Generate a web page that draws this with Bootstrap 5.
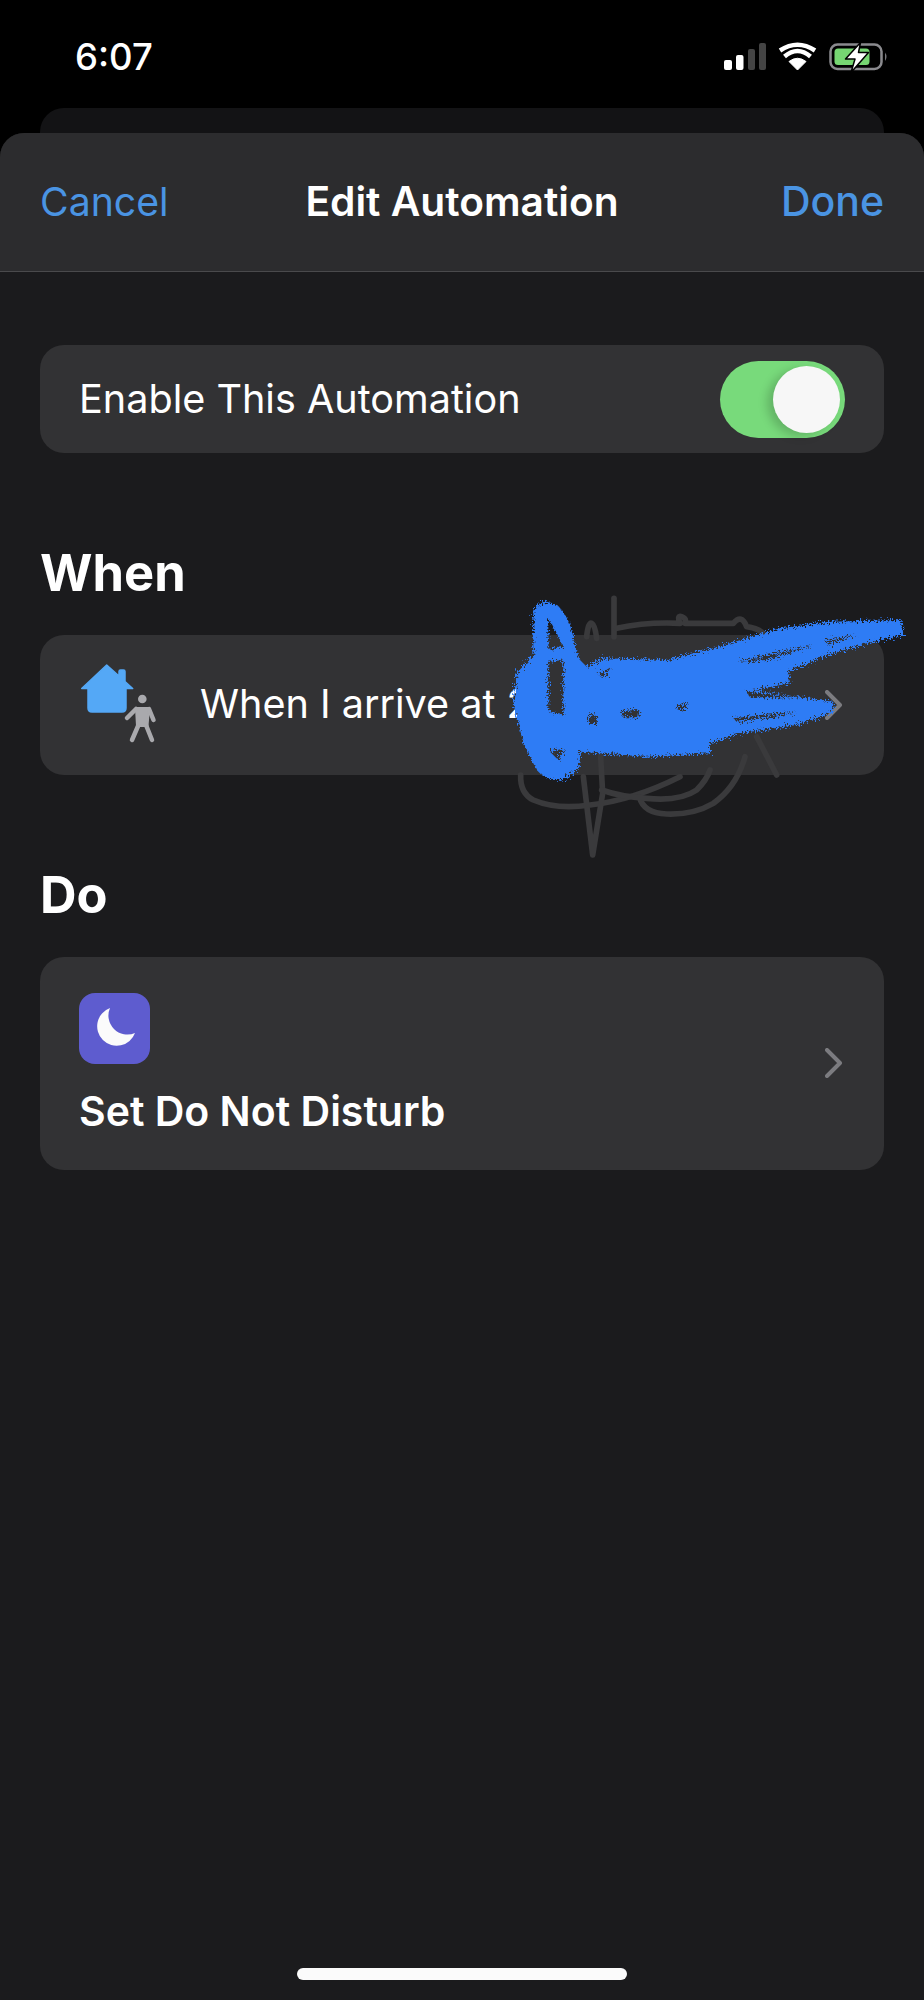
<!DOCTYPE html>
<html lang="en">
<head>
    <meta charset="UTF-8">
    <meta name="viewport" content="width=device-width, initial-scale=1.0">
    <title>Edit Automation</title>
    <link href="https://cdn.jsdelivr.net/npm/bootstrap@5.3.0/dist/css/bootstrap.min.css" rel="stylesheet">
    <style>
        body {
            font-family: Inter, "Liberation Sans", sans-serif;
            background-color: #000;
            color: #fff;
            height: 2000px;
            overflow: hidden;
        }
        .status-row {
            height: 108px;
            padding-left: 75px;
        }
        .status-time {
            font-size: 36.5px;
            font-weight: 500;
            line-height: 1;
            margin-top: 39px;
        }
        .status-icons {
            margin-top: 40px;
            margin-right: 32px;
        }
        .peek-card {
            height: 25px;
            margin: 0 40px;
            background: #131315;
            border-radius: 24px 24px 0 0;
        }
        .sheet {
            height: 1867px;
            background: #1b1b1d;
            border-radius: 24px 24px 0 0;
        }
        .sheet-nav {
            height: 139px;
            padding: 0 40px;
            background: #2c2c2e;
            border-radius: 24px 24px 0 0;
            border-bottom: 1px solid #4a4a4c;
        }
        .sheet-nav a {
            font-size: 39.200px;
            color: #4a94e3;
            text-decoration: none;
        }
        .sheet-nav a.nav-done {
            font-size: 41px;
            font-weight: 500;
        }
        .sheet-title {
            font-size: 40.700px;
            font-weight: 600;
        }
        .sheet-body {
            padding: 73px 40px 0;
        }
        .auto-card {
            background: #323234;
            border: 0;
            border-radius: 24px;
            color: #fff;
            font-size: 39.600px;
        }
        .toggle-card {
            height: 108px;
            padding: 0 39px;
        }
        .toggle-label {
            margin-top: 2px;
        }
        .fake-switch {
            width: 125px;
            height: 77px;
            padding: 5px;
            border-radius: 39px;
            background: #78da7b;
        }
        .fake-knob {
            width: 67px;
            height: 67px;
            border-radius: 50%;
            background: #f7f7f7;
            box-shadow: -6px 3px 10px rgba(0, 0, 0, .18);
        }
        .sec-title {
            font-size: 50.600px;
            font-weight: 700;
            line-height: 60px;
            margin: 0;
        }
        .when-title {
            margin-top: 90px;
            margin-bottom: 32px;
        }
        .do-title {
            margin-top: 90px;
            margin-bottom: 32px;
        }
        .when-card {
            height: 140px;
            padding: 0 41px 0 36px;
        }
        .when-icon {
            margin-right: 39px;
        }
        .do-card {
            height: 213px;
            padding: 36px 41px 0 39px;
        }
        .moon-tile {
            width: 71px;
            height: 71px;
            border-radius: 16px;
            background: #5e5ccf;
        }
        .do-label {
            font-size: 41px;
            font-weight: 600;
            margin-top: 23px;
            line-height: 48px;
        }
        .do-chevron {
            top: 91px;
            right: 41px;
        }
        .home-bar {
            width: 330px;
            height: 12px;
            border-radius: 6px;
            background: #fbfbfb;
            margin-bottom: 20px;
        }
        .scribble {
            top: 580px;
            left: 480px;
            width: 444px;
            height: 290px;
        }
    </style>
</head>
<body class="position-relative">
    <div class="status-row d-flex justify-content-between align-items-start">
        <div class="status-time">6:07</div>
        <svg class="status-icons" width="172" height="34" viewBox="720 40 172 34">
            <rect x="724" y="60" width="8" height="10" rx="2" fill="#fff"/>
            <rect x="736" y="55" width="7.5" height="15" rx="2" fill="#fff"/>
            <rect x="748" y="49" width="7" height="21" rx="2" fill="#444"/>
            <rect x="759" y="43" width="7" height="27" rx="2" fill="#444"/>
            <path d="M797.5 70L789 61.5Q797.5 55 806 61.5Z" fill="#fff" stroke="#fff" stroke-linejoin="round"/>
            <path d="M784.5 56.5Q797.5 45.5 810.5 56.5" fill="none" stroke="#fff" stroke-width="4.5"/>
            <path d="M780 50.5Q797.5 39 815 50.5" fill="none" stroke="#fff" stroke-width="4.5"/>
            <rect x="830.5" y="44.5" width="51" height="24.5" rx="7" fill="none" stroke="#8a8a8e" stroke-width="2.5"/>
            <rect x="834.5" y="48.5" width="35" height="16.5" rx="3.5" fill="#76d672"/>
            <path d="M885 52.5Q888 56.5 885 61Z" fill="#77777b"/>
            <path d="M860.500 42.500L845.500 59H855L851 72.500L868.500 52.500H858.500Z" fill="#fff" stroke="#000" stroke-width="1.500" stroke-linejoin="round"/>
        </svg>
    </div>
    <div class="peek-card"></div>

    <div class="sheet d-flex flex-column">
        <nav class="navbar sheet-nav flex-nowrap justify-content-between position-relative">
            <a href="#">Cancel</a>
            <span class="sheet-title position-absolute top-50 start-50 translate-middle">Edit Automation</span>
            <a href="#" class="nav-done">Done</a>
        </nav>

        <div class="sheet-body">
            <div class="card auto-card toggle-card flex-row align-items-center justify-content-between">
                <span class="toggle-label">Enable This Automation</span>
                <span class="fake-switch d-flex justify-content-end"><span class="fake-knob"></span></span>
            </div>

            <h2 class="sec-title when-title">When</h2>
            <div class="card auto-card when-card flex-row align-items-center">
                <svg width="85" height="90" viewBox="76 660 85 90" class="when-icon flex-shrink-0">
                    <path d="M106.7 665L119 676V671.5Q119 670 120.5 670H123.5Q125 670 125 671.500V681.500L132.700 688.500H126V708Q126 712 122 712H92Q88 712 88 708V688.500H81.700Z" fill="#54a8f6" stroke="#54a8f6" stroke-width="1.500" stroke-linejoin="round"/>
                    <circle cx="142.300" cy="699" r="4.300" fill="#a9a9ad"/>
                    <path d="M136 708H149L147.500 726H137Z" fill="#a9a9ad" stroke="#a9a9ad" stroke-width="2" stroke-linejoin="round"/>
                    <path d="M127 718L136 709M149 709L153.500 720M138.500 725L132 740M146 725L152 740" fill="none" stroke="#a9a9ad" stroke-width="4.500" stroke-linecap="round"/>
                </svg>
                <span>When I arrive at 2</span>
                <svg width="18" height="30" viewBox="0 0 18 30" class="ms-auto">
                    <path d="M2 2L15 15L2 28" fill="none" stroke="#7c7c80" stroke-width="4" stroke-linecap="round" stroke-linejoin="round"/>
                </svg>
            </div>

            <h2 class="sec-title do-title">Do</h2>
            <div class="card auto-card do-card position-relative">
                <div class="moon-tile">
                    <svg width="71" height="71" viewBox="0 0 71 71">
                        <path d="M31 15A19.500 19.500 0 1 0 56 40A19 19 0 0 1 31 15Z" fill="#fbfbfb"/>
                    </svg>
                </div>
                <div class="do-label">Set Do Not Disturb</div>
                <svg width="18" height="30" viewBox="0 0 18 30" class="do-chevron position-absolute">
                    <path d="M2 2L15 15L2 28" fill="none" stroke="#7c7c80" stroke-width="4" stroke-linecap="round" stroke-linejoin="round"/>
                </svg>
            </div>
        </div>

        <div class="home-bar mt-auto mx-auto"></div>
    </div>

    <!-- scribbles someone drew over the address -->
    <svg class="scribble position-absolute" viewBox="0 0 1332 870">
        <defs>
            <filter id="rough" x="-5%" y="-5%" width="110%" height="110%">
                <feTurbulence type="fractalNoise" baseFrequency="0.2" numOctaves="3" seed="4"/>
                <feDisplacementMap in="SourceGraphic" scale="32"/>
            </filter>
        </defs>
        <g fill="none" stroke="#3a3a3c" stroke-width="17" stroke-linecap="round" stroke-linejoin="round">
            <path d="M402 55V170"/>
            <path d="M320 170Q325 125 335 130Q345 135 350 175"/>
            <path d="M410 145Q500 125 600 130Q590 105 605 110Q620 115 615 130H760Q785 100 800 140Q840 145 860 170"/>
            <path d="M122 585Q120 640 160 660Q230 690 330 675Q460 660 600 590"/>
            <path d="M478 650Q490 700 560 702Q640 705 700 670Q770 620 795 530"/>
            <path d="M310 590L338 825L368 640L362 530"/>
            <path d="M365 630Q420 650 500 655Q600 665 650 630Q680 600 690 570"/>
            <path d="M830 470L890 585"/>
        </g>
        <g filter="url(#rough)" fill="#2f7bf5">
            <path fill-rule="evenodd" d="M160 90Q175 65 200 65Q235 70 245 90Q265 115 275 150L295 235L320 260L370 235L560 240L700 205L900 145L1050 125L1265 120L1270 165L1160 190L1040 225L925 275L930 310L820 330L950 350L1060 365L1060 395L950 435L780 460L690 490L690 520L500 530L300 515Q300 560 290 570Q260 600 230 600Q190 595 170 570L130 490L100 370L110 280L160 225L160 130Z
                M205 245L250 240L250 405L205 395Z
                M205 115L250 200L205 210Z
                M355 285L392 262L375 292Z
                M425 392L478 390L475 412L428 412Z
                M322 410L352 402L350 432L325 432Z
                M585 385L625 365L610 395Z
                M760 415L950 395L900 408L770 425Z
                M800 335L960 352L810 352Z
                M770 245L1000 195L860 240Z
                M1040 180L1130 165L1040 195Z
                M210 515L255 505L235 540Z"/>
        </g>
    </svg>

    <script src="https://cdn.jsdelivr.net/npm/bootstrap@5.3.0/dist/js/bootstrap.bundle.min.js"></script>
</body>
</html>
